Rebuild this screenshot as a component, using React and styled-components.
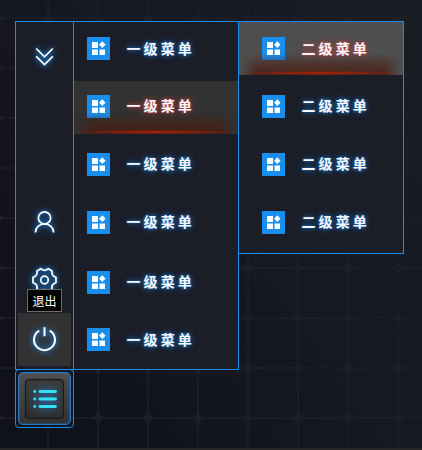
import React from "react";
import styled, { createGlobalStyle, css } from "styled-components";

const BLUE = "#188fee";

const GlobalStyle = createGlobalStyle`
  *, *::before, *::after { box-sizing: border-box; }
  body {
    margin: 0;
    overflow: hidden;
    background: #12151e;
    font-family: "Noto Sans CJK SC", sans-serif;
  }
`;

const gridNode = css`
  radial-gradient(ellipse 6px 2.5px at 25px 25px, #1c1f27 85%, transparent) 23px -7px / 50px 50px,
  radial-gradient(ellipse 2.5px 6px at 25px 25px, #1c1f27 85%, transparent) 23px -7px / 50px 50px,
  radial-gradient(circle at 25px 25px, #1c1f27 3px, transparent 4px) 23px -7px / 50px 50px
`;

const Desktop = styled.div`
  width: 422px;
  height: 450px;
  padding: 21px 0 0 15px;
  border-bottom: 2px solid #252525;
  background:
    ${gridNode},
    linear-gradient(90deg, transparent 47px, #1a1d25 47px, #1a1d25 49px, transparent 49px) 0 0 / 50px 50px,
    linear-gradient(transparent 17px, #1a1d25 17px, #1a1d25 19px, transparent 19px) 0 0 / 50px 50px,
    linear-gradient(55deg, #0f121b 10%, #151821 50%, #1b1d25 100%);
`;

const Menus = styled.div`
  display: flex;
  align-items: flex-start;
`;

const Panel = styled.div`
  width: ${(p) => p.$width}px;
  height: ${(p) => p.$height}px;
  border: 1px solid ${BLUE};
  margin-left: ${(p) => (p.$joined ? -1 : 0)}px;
  background: #1b1e27;
`;

const Sidebar = styled(Panel)`
  display: flex;
  flex-direction: column;
  align-items: center;
  padding-bottom: 3px;
`;

const SideButton = styled.div`
  position: relative;
  width: 53px;
  height: 53px;
  flex: none;
  display: flex;
  align-items: center;
  justify-content: center;
  margin-top: ${(p) => p.$top}px;
  background: ${(p) => (p.$active ? "#323232" : "transparent")};
`;

const Glyph = styled.svg`
  width: 29px;
  height: 29px;
  overflow: visible;
  fill: none;
  stroke: #fff;
  stroke-width: 1.7;
  filter: drop-shadow(0 0 2px rgba(24, 144, 255, 0.75)) drop-shadow(0 0 3px rgba(24, 144, 255, 0.55));
`;

const Tooltip = styled.div`
  position: absolute;
  left: 9px;
  top: -24px;
  width: 35px;
  height: 23px;
  border: 1px solid #6b6b6b;
  background: #000;
  color: #fff;
  font-size: 12px;
  line-height: 21px;
  text-align: center;
  white-space: nowrap;
`;

const MenuPanel = styled(Panel)`
  padding-top: ${(p) => p.$pad}px;
`;

const MenuRow = styled.div`
  position: relative;
  display: flex;
  gap: 16.5px;
  height: 53px;
  padding: ${(p) => p.$inset}px 0 0 ${(p) => p.$indent}px;
  margin-bottom: ${(p) => p.$gap}px;
  background: ${(p) => p.$active || "transparent"};
  overflow: hidden;
`;

const EmberGlow = styled.span`
  position: absolute;
  inset: auto 0 0;
  height: 21px;
  background: linear-gradient(transparent, rgba(76, 30, 18, 0.55) 50%, rgba(72, 28, 18, 0.85));
  mask-image: linear-gradient(90deg, transparent 1%, #000 11%, #000 89%, transparent 98%);
`;

const EmberLine = styled.span`
  position: absolute;
  left: 0;
  right: 0;
  bottom: 0;
  height: 4px;
  background: radial-gradient(ellipse 50% 2px at 50% 50%, #b82206, rgba(160, 32, 8, 0.6) 55%, transparent);
`;

const Tile = styled.svg`
  width: 23px;
  height: 23px;
  flex: none;
  background: ${BLUE};
  fill: #fff;
`;

const Label = styled.span`
  margin-top: ${(p) => p.$shift}px;
  font-size: 14px;
  font-weight: 700;
  line-height: 20px;
  height: 20px;
  letter-spacing: 3.1px;
  color: #f7f9ff;
  white-space: nowrap;
  text-shadow: ${(p) => (p.$hot
    ? "0 0 3px rgba(216, 64, 64, .8), 0 0 6px rgba(224, 72, 72, .8)"
    : "0 0 3px rgba(24, 120, 208, .8), 0 0 6px rgba(24, 144, 255, .75)")};
`;

const StartFrame = styled.div`
  width: 59px;
  height: 59px;
  margin-top: -1px;
  padding: 2px;
  border: 1px solid ${BLUE};
  border-radius: 4px;
  background: #111620;
`;

const StartKey = styled.div`
  width: 53px;
  height: 53px;
  display: flex;
  align-items: center;
  justify-content: center;
  border: 1.5px solid #2779c4;
  border-radius: 5px;
  box-shadow: inset 0 0 2px #2779c4;
  background: linear-gradient(#505050, #323232);
`;

const StartFace = styled.div`
  width: 39px;
  height: 40px;
  display: flex;
  align-items: center;
  justify-content: center;
  border: 1px solid #1c1819;
  border-radius: 4px;
  box-shadow: inset 0 0 1px #1c1819, 0 0 1px #1c1819;
  background: linear-gradient(#3b3b3b, #2e2e2e);
`;

const ListGlyph = styled.svg`
  width: 24px;
  height: 20px;
  overflow: visible;
  stroke: #35e0f5;
  stroke-width: 2.9;
  stroke-linecap: round;
  filter: drop-shadow(0 0 4px rgba(24, 144, 255, 0.9));
`;

function MenuItem({ label, indent, inset, active, shift, gap = 5 }) {
  return (
    <MenuRow $indent={indent} $inset={inset} $active={active} $gap={gap}>
      <Tile viewBox="0 0 23 23">
        <path d="M5 5h6v6H5zM5 12.5h6V18H5zM12.5 12.5H18V18h-5.5zM15.3 4.3l3.3 3.4-3.3 3.4L12 7.7z" />
      </Tile>
      <Label $hot={Boolean(active)} $shift={shift}>{label}</Label>
      {active && <EmberGlow />}
      {active && <EmberLine />}
    </MenuRow>
  );
}

const primary = [
  { gap: 5, shift: 1 },
  { gap: 5, shift: 0, active: "#323232" },
  { gap: 5, shift: 0 },
  { gap: 7, shift: 0 },
  { gap: 4, shift: 0 },
  { gap: 0, shift: 1 },
];

const secondary = [
  { shift: 1, active: "#4e4e4e" },
  { shift: 0 },
  { shift: 0 },
  { shift: 0 },
];

export default function App() {
  return (
    <>
      <GlobalStyle />
      <Desktop>
        <Menus>
          <Sidebar $width={59} $height={349}>
            <SideButton $top={7}>
              <Glyph viewBox="0.5 0.5 29 29">
                <path d="M6.7 8 15 16.3 23.3 8M6.7 15.8l8.3 8.3 8.3-8.3" />
              </Glyph>
            </SideButton>
            <SideButton $top={113}>
              <Glyph viewBox="0.5 0.5 29 29">
                <circle cx="15" cy="11.4" r="6.1" />
                <path d="M5.9 26a9.1 8.6 0 0 1 18.2 0" />
              </Glyph>
            </SideButton>
            <SideButton $top={5}>
              <Glyph viewBox="0.5 0.5 29 29">
                <circle cx="15" cy="15.5" r="3.8" />
                <path d="M11.2 4.2Q15 7.6 18.8 4.2L22.6 6.4Q21.5 11.3 26.5 12.9V18.1Q21.5 19.7 22.6 24.6L18.8 26.8Q15 23.4 11.2 26.8L7.4 24.6Q8.5 19.7 3.5 18.1V12.9Q8.5 11.3 7.4 6.4Z" strokeLinejoin="round" />
              </Glyph>
            </SideButton>
            <SideButton $top={7} $active>
              <Glyph viewBox="0.5 0.5 29 29">
                <path d="M9.8 6.1a10.5 10.5 0 1 0 10.4 0M15 2.7v9" strokeWidth="2" />
              </Glyph>
              <Tooltip>退出</Tooltip>
            </SideButton>
          </Sidebar>
          <MenuPanel $width={166} $height={349} $pad={1} $joined>
            {primary.map((item, i) => (
              <MenuItem key={i} label="一级菜单" indent={13} inset={14} {...item} />
            ))}
          </MenuPanel>
          <MenuPanel $width={166} $height={233} $pad={0} $joined>
            {secondary.map((item, i) => (
              <MenuItem key={i} label="二级菜单" indent={23} inset={15} {...item} />
            ))}
          </MenuPanel>
        </Menus>
        <StartFrame>
          <StartKey>
            <StartFace>
              <ListGlyph viewBox="0 0 24 20">
                <path d="M1.7 2.5h.1M7 2.5h15.5M1.7 10h.1M7 10h15.5M1.7 17.5h.1M7 17.5h15.5" />
              </ListGlyph>
            </StartFace>
          </StartKey>
        </StartFrame>
      </Desktop>
    </>
  );
}
